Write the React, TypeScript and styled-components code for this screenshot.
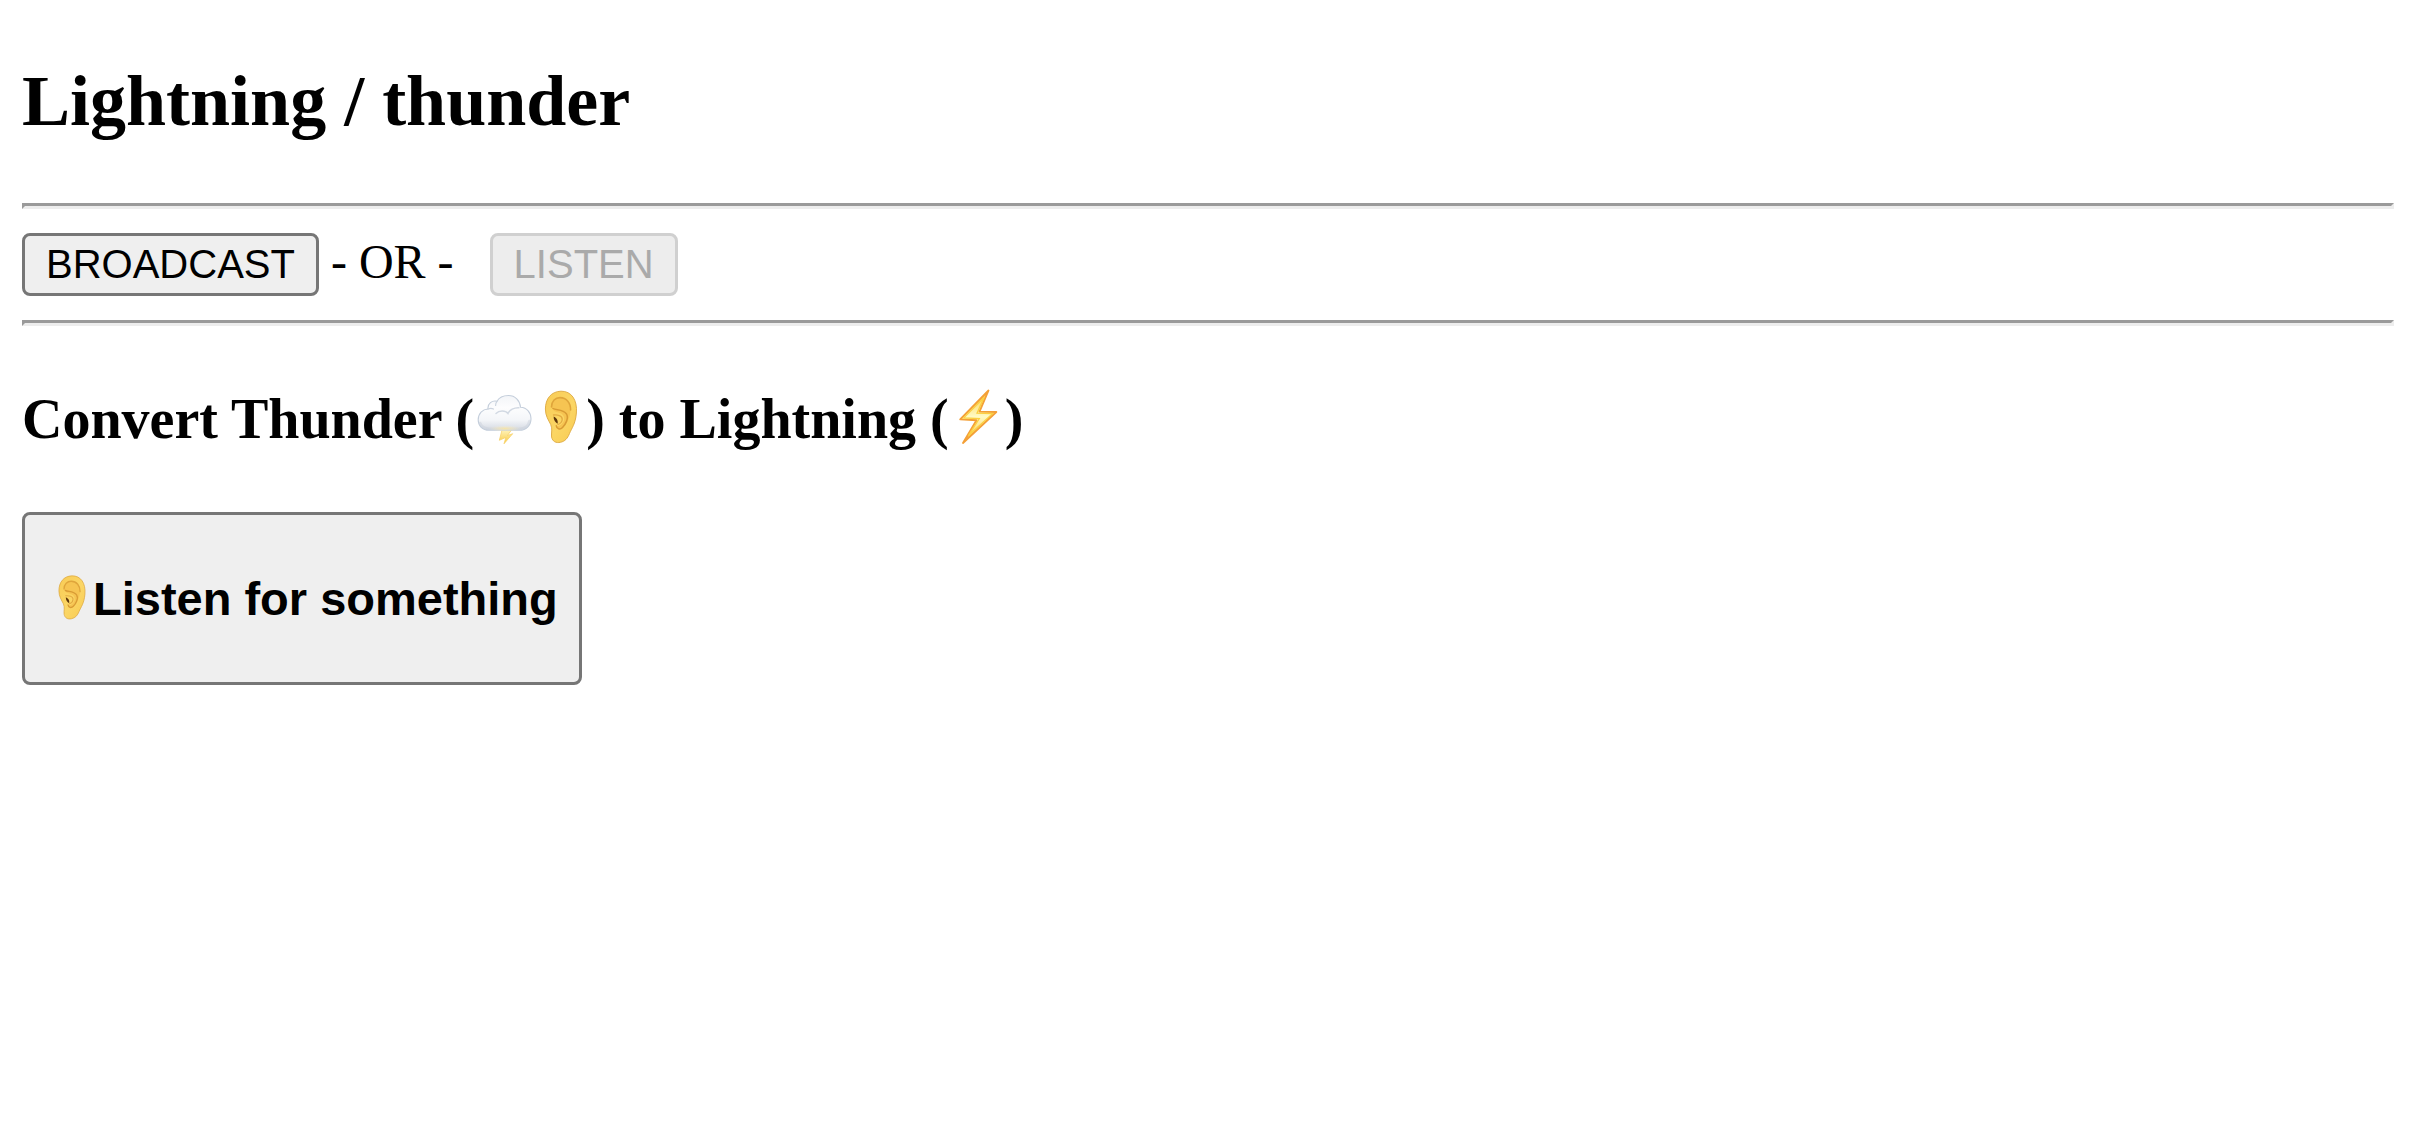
import React from "react";
import styled, { createGlobalStyle } from "styled-components";

const GlobalStyle = createGlobalStyle`
  body {
    margin: 0;
    background: #fff;
    color: #000;
    font-family: "Liberation Serif", "Times New Roman", serif;
    font-size: 48px;
  }
`;

const Page = styled.main`
  padding: 60px 16px 24px 22px;
`;

const Title = styled.h2`
  margin: 0 0 60px;
  font-size: 72px;
  line-height: 83px;
`;

const Divider = styled.hr`
  margin: 0;
  height: 0;
  border: 3px solid;
  border-color: #9a9a9a #ededed #ededed #9a9a9a;
`;

const ModeRow = styled.div`
  margin: 24px 0;
  line-height: 55px;
`;

const Button = styled.button`
  box-sizing: border-box;
  margin: 0;
  padding: 6px 21px;
  border: 3px solid #767676;
  border-radius: 8px;
  background: #efefef;
  color: #000;
  font-family: "Liberation Sans", Arial, sans-serif;
  font-size: 40px;
  line-height: 45px;

  &:disabled {
    border-color: #d0d0d0;
    background: #ededed;
    color: #aaa;
  }
`;

const Subtitle = styled.h3`
  margin: 56px 0;
  font-size: 56px;
  line-height: 74px;
`;

const ButtonHeading = styled.span`
  display: block;
  margin: 47px 0;
  font-size: 47px;
  font-weight: bold;
  line-height: 61px;
`;

const ActionButton = styled(Button)`
  display: block;
`;

const Glyph = styled.svg`
  width: 1em;
  height: 1em;
  overflow: visible;
  vertical-align: -0.125em;
`;

function ThunderCloud() {
  return (
    <Glyph viewBox="-2 0 56 56" role="img" aria-label="Thunder cloud">
      <defs>
        <linearGradient id="cloudFill" x1="0" y1="0" x2="0" y2="1">
          <stop offset="0" stopColor="#f3f5f8" />
          <stop offset="0.35" stopColor="#fdfdfe" />
          <stop offset="0.7" stopColor="#f4f6f9" />
          <stop offset="1" stopColor="#d3d8e1" />
        </linearGradient>
        <radialGradient id="glow" cx="0.5" cy="0.5" r="0.5">
          <stop offset="0" stopColor="#ffe79a" stopOpacity="0.8" />
          <stop offset="1" stopColor="#fff1c4" stopOpacity="0" />
        </radialGradient>
        <linearGradient id="spark" x1="0" y1="0" x2="0" y2="1">
          <stop offset="0" stopColor="#fff3b8" />
          <stop offset="1" stopColor="#f8ca45" />
        </linearGradient>
      </defs>
      <path
        d="M26 41 L35.5 41 L31.5 46.5 L36.7 44.7 L28 54.8 L29.8 48.5 L23.3 51.3 Z"
        fill="url(#spark)"
        stroke="#f6cf62"
        strokeWidth="0.7"
      />
      <path
        d="M13 41.3 C6.5 41.3 2.2 36.8 2.2 31 C2.2 24.5 6.5 20.3 12 20 C11.5 14.5 16 11.2 21 12.3 C23 8.5 27.5 6.5 32.5 6.5 C39 6.5 44 11.5 44.5 18.2 C51 18.6 55 23.5 55 29.8 C55 36.5 50 41.3 43.5 41.3 Z"
        fill="url(#cloudFill)"
        stroke="#c4cedb"
        strokeWidth="1.1"
      />
      <path
        d="M4.2 34 C5.5 37.5 9 39.6 13 39.6 L43.5 39.6 C48.5 39.6 52.5 36.5 53.3 32"
        fill="none"
        stroke="#c8cfda"
        strokeWidth="2.4"
        strokeOpacity="0.45"
        strokeLinecap="round"
      />
      <path
        d="M20 24.5 C23 21.2 29.5 21.2 32 24.5 C33.5 21 38 18.5 43 18.8"
        fill="none"
        stroke="#d2d9e3"
        strokeWidth="1.4"
        strokeLinecap="round"
      />
      <path
        d="M12 20 C14 19 16 19.2 17.5 20 M21 12.3 C20 13.5 19.5 15 19.6 16.5"
        fill="none"
        stroke="#ccd4df"
        strokeWidth="1.2"
        strokeLinecap="round"
      />
      <ellipse cx="29" cy="39.5" rx="16" ry="3" fill="url(#glow)" />
    </Glyph>
  );
}

interface EarProps {
  id: string;
}

function Ear({ id }: EarProps) {
  return (
    <Glyph viewBox="-2 0 56 56" role="img" aria-label="Ear">
      <defs>
        <linearGradient id={id} x1="0" y1="0" x2="1" y2="1">
          <stop offset="0" stopColor="#f8cb55" />
          <stop offset="0.55" stopColor="#fbd665" />
          <stop offset="1" stopColor="#f8ca50" />
        </linearGradient>
      </defs>
      <path
        d="M29 2.2 C19 2.4 13.4 10 13.4 20 C13.4 27 16.5 31 18.7 35.5 C20.8 40 19 44 19.6 48 C20.4 52.5 24 54.3 28.5 53.3 C33 52.3 35.5 49.5 37.5 44.5 C39.5 39.5 43.5 35 44.4 24 C45.5 11 39.5 2 29 2.2 Z"
        fill={`url(#${id})`}
        stroke="#dda840"
        strokeWidth="0.9"
      />
      <path
        d="M20.5 20 C18.5 14.5 21.5 8.6 28 8.6 C35.5 8.6 39.2 16 38.4 23 C37.6 30 34.5 35 31.5 38.5 C28 42 24.5 40.5 24 37 C26.5 38 30.5 35.5 32 31.5 C33 27.5 30.5 24.5 26.5 23.5 C23.5 22.8 21.3 22 20.5 20 Z"
        fill="#f6c452"
      />
      <path
        d="M19.5 18 C19.5 12 23.5 8.6 28 8.6 C34.5 8.6 38.8 14 38.6 21"
        fill="none"
        stroke="#dfa53b"
        strokeWidth="1.6"
        strokeLinecap="round"
      />
      <path
        d="M21 19.5 C24 21.5 31 20 34.5 25 C37 29 33.5 35.5 30.5 38.5 C28 41 24.8 40 24.3 36.8"
        fill="none"
        stroke="#d99c35"
        strokeWidth="1.5"
        strokeLinecap="round"
      />
      <path
        d="M21.5 26 C25 25.5 30.5 26.5 30.2 30.5 C30 33.5 27.8 34.8 26 35.5"
        fill="none"
        stroke="#e3ab42"
        strokeWidth="1.3"
        strokeLinecap="round"
      />
      <path
        d="M21.6 27.6 C24.6 28.8 26.2 31.5 25.6 34.8 C23.3 33.5 21.6 31 21.6 27.6 Z"
        fill="#5e360b"
      />
    </Glyph>
  );
}

function Lightning() {
  return (
    <Glyph viewBox="-2 0 56 56" role="img" aria-label="Lightning">
      <defs>
        <linearGradient id="bolt" x1="0" y1="0" x2="0" y2="1">
          <stop offset="0" stopColor="#fbc93f" />
          <stop offset="0.5" stopColor="#fffbc4" />
          <stop offset="1" stopColor="#fbc03a" />
        </linearGradient>
      </defs>
      <path
        d="M37.5 1.5 L9.2 30.4 L25.5 31.2 L12 54 L45.3 23 L28.5 22.6 Z"
        fill="url(#bolt)"
        stroke="#f4a037"
        strokeWidth="1.9"
        strokeLinejoin="round"
      />
      <path
        d="M33 8.5 L12.8 28.9 L28.3 29.6 L17.5 46.5 L41.5 24.7 L26 24.2 Z"
        fill="none"
        stroke="#fbd040"
        strokeWidth="1.3"
      />
    </Glyph>
  );
}

export default function App() {
  return (
    <>
      <GlobalStyle />
      <Page>
        <Title>Lightning / thunder</Title>
        <Divider />
        <ModeRow>
          <Button type="button">BROADCAST</Button>
          {" - OR - \u00a0 "}
          <Button type="button" disabled>
            LISTEN
          </Button>
        </ModeRow>
        <Divider />
        <Subtitle>
          Convert Thunder (<ThunderCloud />
          <Ear id="headingEar" />) to Lightning (<Lightning />)
        </Subtitle>
        <ActionButton type="button">
          <ButtonHeading>
            <Ear id="buttonEar" />
            Listen for something
          </ButtonHeading>
        </ActionButton>
      </Page>
    </>
  );
}
